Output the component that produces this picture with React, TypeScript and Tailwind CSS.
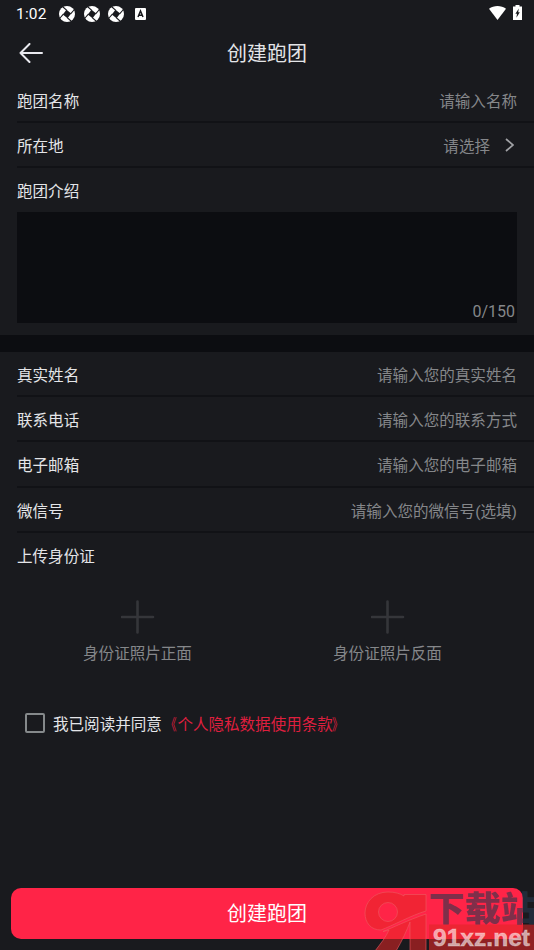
import React, { useState } from 'react';

const contactFields = [
  { label: '真实姓名', placeholder: '请输入您的真实姓名' },
  { label: '联系电话', placeholder: '请输入您的联系方式' },
  { label: '电子邮箱', placeholder: '请输入您的电子邮箱' },
  { label: '微信号', placeholder: '请输入您的微信号(选填)' },
];

const ShutterIcon: React.FC = () => (
  <svg className="w-4 h-4" viewBox="0 0 16 16">
    <circle cx="8" cy="8" r="8" fill="#fff" />
    <path d="M7.5 3.8 12.2 7.5 8.5 12.2 3.8 8.5Z" fill="#191a1e" />
    <path d="M7.8 4.4 4 1M11.6 7.8 15 4M8.2 11.6 12 15M4.4 8.2 1 12" stroke="#191a1e" strokeWidth="1.1" />
  </svg>
);

const StatusBar: React.FC = () => (
  <div className="h-7 shrink-0 flex items-center pl-4 pr-[15px] text-white">
    <span className="text-[15.5px] w-[31px] pt-[2px] leading-none whitespace-nowrap tracking-[0.2px]">1:02</span>
    <div className="flex items-center gap-[8.5px] ml-3 -mt-px">
      <ShutterIcon />
      <ShutterIcon />
      <ShutterIcon />
    </div>
    <svg className="w-[11px] h-3 ml-[11px]" viewBox="0 0 11 12">
      <rect width="11" height="12" rx="1" fill="#fff" />
      <path d="M3 9 5.5 3 8 9M3.8 7.2h3.4" fill="none" stroke="#191a1e" strokeWidth="1.5" />
    </svg>
    <svg className="w-[17px] h-[14px] ml-auto -mt-[2px]" viewBox="0 0 17 14">
      <path d="M0 2.8C4.8-.9 12.2-.9 17 2.8L8.5 14Z" fill="#fff" />
    </svg>
    <svg className="w-[9px] h-[15px] ml-[7px] -mr-[3px] -mt-[3px]" viewBox="0 0 9 15">
      <path d="M2.5 0h4v1.5H9V15H0V1.5h2.5Z" fill="#fff" />
      <path d="M5.8 3.4 2.4 8.8h1.6L3.4 12.8 6.8 7.2H5.2Z" fill="#191a1e" />
    </svg>
  </div>
);

const FormRow: React.FC<{ label: string; children: React.ReactNode }> = ({ label, children }) => (
  <div className="h-[45.2px] pt-[6px] ml-[17px] pr-[17px] flex items-center justify-between border-b-2 border-[#111216]">
    <span>{label}</span>
    {children}
  </div>
);

const UploadBox: React.FC<{ label: string }> = ({ label }) => (
  <button className="w-[250px] flex flex-col items-center text-[#85878a]">
    <svg className="w-[34px] h-[34px]" viewBox="0 0 34 34">
      <path d="M16.5 1.5v31M1 17h31" stroke="#35363a" strokeWidth="2.6" strokeLinecap="round" />
    </svg>
    <span className="mt-2 leading-6">{label}</span>
  </button>
);

const Watermark: React.FC = () => (
  <div className="absolute right-0 bottom-0 w-[172px] h-[60px] overflow-hidden pointer-events-none">
    <svg className="w-full h-full" viewBox="362 890 172 60">
      <g fill="#e62525" fillOpacity="0.55" stroke="#ef5a63" strokeOpacity="0.6" strokeWidth="1">
        <path
          fillRule="evenodd"
          d="M388 892C374 892 365 902 365 913C365 923 371 930 381 930C392 926 412 915 426 911V894.5H404V896C400 893.5 395 892 388 892ZM388 902.5A9.5 9.5 0 1 1 388 921.5A9.5 9.5 0 1 1 388 902.5Z"
        />
        <path d="M383 931.5C392 928 408 920 426 914V951H410V922C407 930 402 941 396 951H375C381 943 386 937 389 930Z" />
      </g>
      <rect x="429" y="924.5" width="105" height="25.5" fill="#e02727" fillOpacity="0.6" />
      <text x="428.5" y="921" fontSize="34" fontWeight="900" textLength="108" lengthAdjust="spacingAndGlyphs" fill="#27384d" fillOpacity="0.6">下载站</text>
      <text x="433" y="945.5" fontSize="23" fontWeight="700" fontFamily="Liberation Sans" textLength="97" lengthAdjust="spacingAndGlyphs" fill="#fff" fillOpacity="0.6" stroke="#fff" strokeOpacity="0.3" strokeWidth="0.8">91xz.net</text>
    </svg>
  </div>
);

export default function App() {
  const [agreed, setAgreed] = useState(false);

  return (
    <div className="relative w-full h-[950px] overflow-hidden flex flex-col bg-[#191a1e] text-[#e4e5e8] text-[15.55px] font-[Roboto,'Noto_Sans_CJK_SC',sans-serif]">
      <StatusBar />

      <header className="h-[50px] shrink-0 grid grid-cols-[1fr_auto_1fr] items-center px-[19px]">
        <button className="-mt-px">
          <svg className="w-6 h-5" viewBox="0 0 24 20">
            <path d="M10.5 1 1.5 10 10.5 19M1.5 10H23" fill="none" stroke="#e9e9ef" strokeWidth="2" strokeLinecap="round" strokeLinejoin="round" />
          </svg>
        </button>
        <h1 className="text-[20px] pt-px">创建跑团</h1>
      </header>

      <section className="h-[257px] shrink-0 -mt-[0.4px]">
        <FormRow label="跑团名称">
          <span className="text-[#85878a]">请输入名称</span>
        </FormRow>
        <FormRow label="所在地">
          <span className="flex items-center gap-[15px] text-[#85878a]">
            请选择
            <svg className="w-[9px] h-[14px] mr-[3px] -mt-[4px]" viewBox="0 0 9 14">
              <path d="M1 1 8 7 1 13" fill="none" stroke="#a0a1a5" strokeWidth="1.7" />
            </svg>
          </span>
        </FormRow>
        <div className="h-[44px] pt-[6px] ml-[17px] flex items-center">跑团介绍</div>
        <div className="h-[111.5px] mx-[17px] bg-[#0c0d11] flex items-end justify-end pr-[2px] pb-px text-[#85878a]">
          <span className="text-base leading-5">0/150</span>
        </div>
      </section>

      <div className="h-[17.4px] shrink-0 bg-[#0c0d11]" />

      <section className="shrink-0">
        {contactFields.map((field) => (
          <FormRow key={field.label} label={field.label}>
            <span className="text-[#85878a]">{field.placeholder}</span>
          </FormRow>
        ))}
        <div className="h-[46px] pt-[3px] ml-[17px] flex items-center">上传身份证</div>
        <div className="mt-[21px] flex justify-center pr-[9px]">
          <UploadBox label="身份证照片正面" />
          <UploadBox label="身份证照片反面" />
        </div>
      </section>

      <div className="mt-[43px] ml-[25px] flex items-center">
        <button
          onClick={() => setAgreed(!agreed)}
          className={`w-5 h-5 mt-px border-2 border-[#85898b] rounded-[2px] ${agreed ? 'bg-[#ff2447]' : 'bg-transparent'}`}
        />
        <span className="ml-2 pt-[5px]">我已阅读并同意</span>
        <span className="pt-[5px] text-[#df1f3e]">
          <span className="inline-block origin-right scale-x-[0.7] -translate-x-px">《</span>
          个人隐私数据使用条款
          <span className="inline-block origin-left scale-x-[0.7] -translate-x-px">》</span>
        </span>
      </div>

      <button className="mt-auto mb-[11px] ml-[11px] w-[512px] h-[51px] shrink-0 rounded-[10px] bg-[#ff2447] text-white text-[20px]">
        创建跑团
      </button>
      <Watermark />
    </div>
  );
}
